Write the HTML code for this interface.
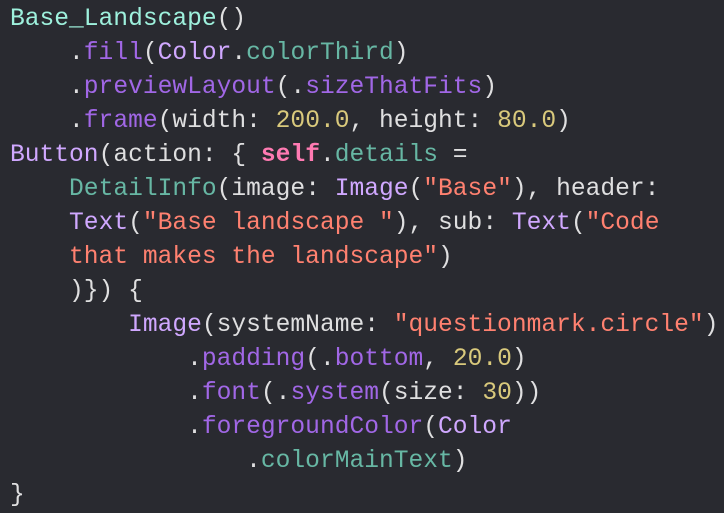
<!DOCTYPE html>
<html><head><meta charset="utf-8"><style>
html,body{margin:0;padding:0;background:#292a30;width:724px;height:512px;overflow:hidden}
pre{margin:0;position:absolute;left:10px;top:3px;font-family:"Liberation Mono",monospace;font-size:24.6px;line-height:34px;color:#dfdfe0;white-space:pre}
.p{color:#9ef1dd}.t{color:#d0a8ff}.m{color:#a167e6}.i{color:#67b7a4}.k{color:#ff7ab2;font-weight:bold}.n{color:#d9c97c}.s{color:#ff8170}
</style></head><body><pre><span class="p">Base_Landscape</span>()
    .<span class="m">fill</span>(<span class="t">Color</span>.<span class="i">colorThird</span>)
    .<span class="m">previewLayout</span>(.<span class="m">sizeThatFits</span>)
    .<span class="m">frame</span>(width: <span class="n">200.0</span>, height: <span class="n">80.0</span>)
<span class="t">Button</span>(action: { <span class="k">self</span>.<span class="i">details</span> =
    <span class="i">DetailInfo</span>(image: <span class="t">Image</span>(<span class="s">"Base"</span>), header:
    <span class="t">Text</span>(<span class="s">"Base landscape "</span>), sub: <span class="t">Text</span>(<span class="s">"Code</span>
<span class="s">    that makes the landscape"</span>)
    )}) {
        <span class="t">Image</span>(systemName: <span class="s">"questionmark.circle"</span>)
            .<span class="m">padding</span>(.<span class="m">bottom</span>, <span class="n">20.0</span>)
            .<span class="m">font</span>(.<span class="m">system</span>(size: <span class="n">30</span>))
            .<span class="m">foregroundColor</span>(<span class="t">Color</span>
                .<span class="i">colorMainText</span>)
}</pre></body></html>
